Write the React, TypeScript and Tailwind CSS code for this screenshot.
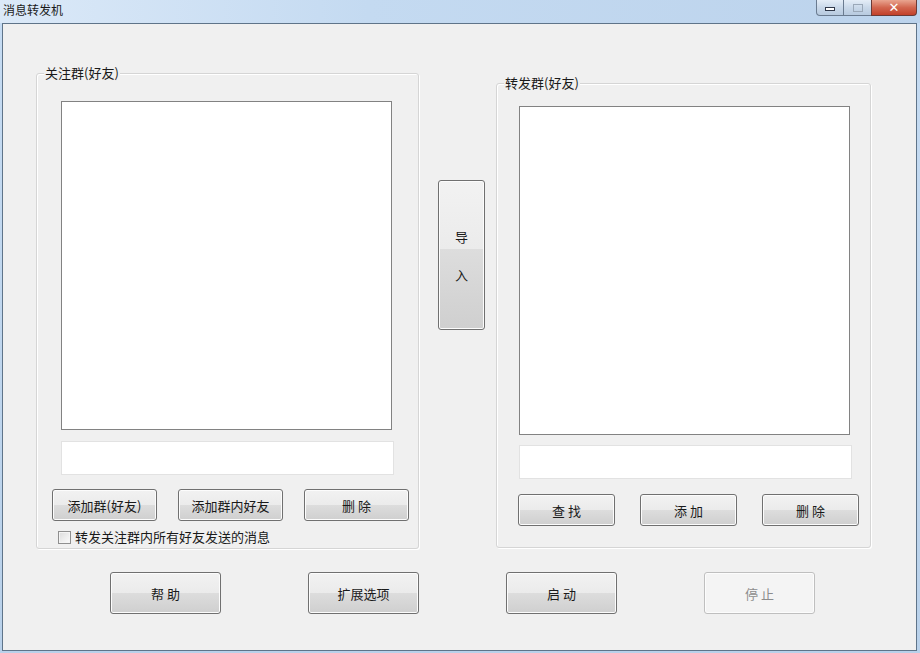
import React from "react";

const font = { fontFamily: '"Noto Sans CJK SC", "Noto Sans", sans-serif' };

function Btn({ label, w, h, disabled }: { label: string; w: string; h: string; disabled?: boolean }) {
  const base = "flex items-center justify-center rounded-[3px] border text-[13px] leading-none shadow-[inset_0_0_0_1px_#fcfcfc] shrink-0";
  return (
    <div
      className={
        disabled
          ? `${base} ${w} ${h} border-[#bfbfbf] bg-[#f4f4f4] text-[#8c8c8c]`
          : `${base} ${w} ${h} border-[#707070] bg-[linear-gradient(to_bottom,#f2f2f2_0%,#ebebeb_50%,#dddddd_50%,#cfcfcf_100%)] text-[#1a1a1a]`
      }
    >
      <span className="whitespace-pre">{label}</span>
    </div>
  );
}

function GroupBox({ label, className, children }: { label: string; className: string; children: React.ReactNode }) {
  return (
    <div
      className={`relative shrink-0 rounded-[3px] border border-[#d5d5d5] shadow-[inset_1px_1px_0_#ffffff,1px_1px_0_#ffffff] ${className}`}
    >
      <span className="absolute left-[7px] top-[-10px] bg-[#f0f0f0] px-[1px] text-[13px] leading-[18px] text-[#1a1a1a]">
        {label}
      </span>
      {children}
    </div>
  );
}

export default function App() {
  return (
    <div
      className="flex h-[653px] w-[920px] flex-col bg-[linear-gradient(to_bottom,#c6dcf3,#b9d1ea)]"
      style={font}
    >
      {/* title bar */}
      <div className="flex h-[23px] shrink-0 items-start bg-[linear-gradient(to_right,#dbe9f8,#c4daf1_40%,#bcd3ec)]">
        <span className="ml-[3px] mt-[2px] text-[12px] leading-[16px] text-[#1a1a1a]">消息转发机</span>
        <div className="ml-auto mr-[3px] flex h-[16px]">
          <div className="flex h-[16px] w-[28px] items-center justify-center rounded-bl-[4px] border border-t-0 border-[#6a7b90] bg-[linear-gradient(to_bottom,#e4edf7,#c9d8e9_50%,#b7cadf)]">
            <div className="mt-[3px] h-[4px] w-[10px] border border-[#30394a] bg-white" />
          </div>
          <div className="flex h-[16px] w-[27px] items-center justify-center border-b border-[#6a7b90] bg-[linear-gradient(to_bottom,#e4edf7,#c9d8e9_50%,#b7cadf)]">
            <div className="h-[8px] w-[10px] border border-[#9aa8b8]" />
          </div>
          <div className="flex h-[16px] w-[46px] items-center justify-center rounded-br-[4px] border border-t-0 border-[#6a3a36] bg-[linear-gradient(to_bottom,#e9a590,#d2664f_50%,#c2402a)]">
            <span className="text-[13px] font-bold leading-none text-white" style={{ fontFamily: '"DejaVu Sans", sans-serif' }}>
              ✕
            </span>
          </div>
        </div>
      </div>

      {/* client area */}
      <div className="ml-[2px] mr-[3px] mb-[2px] flex flex-1 flex-col border border-[#5f7489] bg-[#f0f0f0]">
        <div className="flex items-start pl-[33px] pt-[49px]">
          {/* left group */}
          <GroupBox label="关注群(好友)" className="h-[476px] w-[383px]">
            <div className="flex flex-col">
              <div className="ml-[24px] mt-[27px] h-[329px] w-[331px] border border-[#828282] bg-white" />
              <div className="ml-[24px] mt-[11px] h-[34px] w-[333px] border border-[#e2e2e2] bg-white" />
              <div className="ml-[15px] mt-[14px] flex gap-[21px]">
                <Btn label="添加群(好友)" w="w-[105px]" h="h-[32px]" />
                <Btn label="添加群内好友" w="w-[105px]" h="h-[32px]" />
                <Btn label="删 除" w="w-[105px]" h="h-[32px]" />
              </div>
              <div className="ml-[21px] mt-[9px] flex items-center gap-[4px]">
                <div className="h-[13px] w-[13px] border border-[#8f8f8f] bg-[linear-gradient(135deg,#dcdcdc,#fbfbfb)] shadow-[inset_0_0_0_1px_#f4f4f4]" />
                <span className="text-[13px] leading-[14px] text-[#1a1a1a]">转发关注群内所有好友发送的消息</span>
              </div>
            </div>
          </GroupBox>

          {/* middle import button */}
          <div className="ml-[19px] mt-[107px] flex h-[150px] w-[47px] shrink-0 flex-col items-center justify-center gap-[21px] rounded-[3px] border border-[#707070] bg-[linear-gradient(to_bottom,#f2f2f2_0%,#ebebeb_46%,#dddddd_46%,#cfcfcf_100%)] text-[13px] leading-[17px] text-[#1a1a1a] shadow-[inset_0_0_0_1px_#fcfcfc]">
            <span>导</span>
            <span>入</span>
          </div>

          {/* right group */}
          <GroupBox label="转发群(好友)" className="ml-[11px] mt-[10px] h-[465px] w-[375px]">
            <div className="flex flex-col">
              <div className="ml-[22px] mt-[22px] h-[329px] w-[331px] border border-[#828282] bg-white" />
              <div className="ml-[22px] mt-[10px] h-[34px] w-[333px] border border-[#e2e2e2] bg-white" />
              <div className="ml-[21px] mt-[15px] flex gap-[25px]">
                <Btn label="查 找" w="w-[97px]" h="h-[32px]" />
                <Btn label="添 加" w="w-[97px]" h="h-[32px]" />
                <Btn label="删 除" w="w-[97px]" h="h-[32px]" />
              </div>
            </div>
          </GroupBox>
        </div>

        {/* bottom buttons */}
        <div className="ml-[107px] mt-[23px] flex gap-[87px]">
          <Btn label="帮 助" w="w-[111px]" h="h-[42px]" />
          <Btn label="扩展选项" w="w-[111px]" h="h-[42px]" />
          <Btn label="启 动" w="w-[111px]" h="h-[42px]" />
          <Btn label="停 止" w="w-[111px]" h="h-[42px]" disabled />
        </div>
      </div>
    </div>
  );
}
